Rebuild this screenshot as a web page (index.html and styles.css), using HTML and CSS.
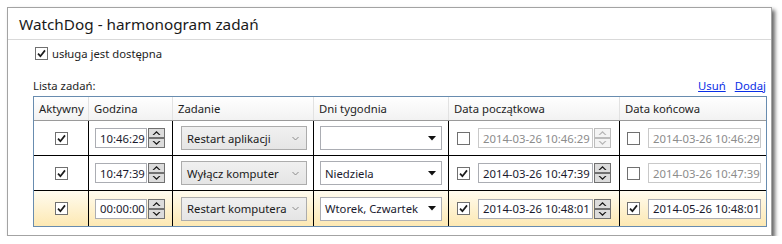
FILE: index.html
```html
<!DOCTYPE html>
<html lang="pl">
<head>
<meta charset="utf-8">
<title>WatchDog - harmonogram zadań</title>
<link rel="stylesheet" href="styles.css">
</head>
<body>
<div class="window">
  <div class="title">WatchDog - harmonogram zadań</div>
  <div class="content">
    <label class="service">
      <svg class="cb" width="13" height="13" viewBox="0 0 13 13"><rect x="0.5" y="0.5" width="12" height="12" fill="#fff" stroke="#707070"/><path d="M3 6.6 L5.4 9.2 L10 3.4" fill="none" stroke="#1c1c1c" stroke-width="1.7"/></svg>
      <span>usługa jest dostępna</span>
    </label>
    <div class="listbar">
      <span>Lista zadań:</span>
      <span class="links"><a href="#">Usuń</a><a href="#">Dodaj</a></span>
    </div>
    <div class="grid">
      <div class="row head">
        <div class="hc">Aktywny</div>
        <div class="hc">Godzina</div>
        <div class="hc">Zadanie</div>
        <div class="hc">Dni tygodnia</div>
        <div class="hc">Data początkowa</div>
        <div class="hc">Data końcowa</div>
      </div>

      <div class="row body">
        <div class="c c1"><svg class="cb" width="13" height="13" viewBox="0 0 13 13"><rect x="0.5" y="0.5" width="12" height="12" fill="#fff" stroke="#707070"/><path d="M3 6.6 L5.4 9.2 L10 3.4" fill="none" stroke="#1c1c1c" stroke-width="1.7"/></svg></div>
        <div class="c c2"><span class="tb time">10:46:29</span><svg class="spin" width="17" height="20" viewBox="0 0 17 20"><rect x="0.5" y="0.5" width="16" height="9" fill="#dcdcdc" stroke="#707070"/><rect x="0.5" y="10.5" width="16" height="9" fill="#dcdcdc" stroke="#707070"/><path d="M4.5 7 L8.5 3 L12.5 7 L11 7 L8.5 4.8 L6 7 Z" fill="#111"/><path d="M4.5 13 L8.5 17 L12.5 13 L11 13 L8.5 15.2 L6 13 Z" fill="#111"/></svg></div>
        <div class="c c3"><span class="combo">Restart aplikacji<svg class="chev" width="7" height="5" viewBox="0 0 7 5"><path d="M0.5 1 L3.5 4 L6.5 1" fill="none" stroke="#8a8a8a" stroke-width="1"/></svg></span></div>
        <div class="c c4"><span class="dd"><span></span><svg class="tri" width="8" height="5" viewBox="0 0 8 5"><path d="M0 0 H8 L4 4.5 Z" fill="#111"/></svg></span></div>
        <div class="c c5"><svg class="cb" width="13" height="13" viewBox="0 0 13 13"><rect x="0.5" y="0.5" width="12" height="12" fill="#fff" stroke="#707070"/></svg><span class="tb date dis">2014-03-26 10:46:29</span><svg class="spin" width="17" height="20" viewBox="0 0 17 20"><rect x="0.5" y="0.5" width="16" height="9" fill="#f4f4f4" stroke="#bcbcbc"/><rect x="0.5" y="10.5" width="16" height="9" fill="#f4f4f4" stroke="#bcbcbc"/><path d="M4.5 7 L8.5 3 L12.5 7 L11 7 L8.5 4.8 L6 7 Z" fill="#b5b5b5"/><path d="M4.5 13 L8.5 17 L12.5 13 L11 13 L8.5 15.2 L6 13 Z" fill="#b5b5b5"/></svg></div>
        <div class="c c6"><svg class="cb" width="13" height="13" viewBox="0 0 13 13"><rect x="0.5" y="0.5" width="12" height="12" fill="#fff" stroke="#707070"/></svg><span class="tb end dis">2014-03-26 10:46:29</span></div>
      </div>

      <div class="row body">
        <div class="c c1"><svg class="cb" width="13" height="13" viewBox="0 0 13 13"><rect x="0.5" y="0.5" width="12" height="12" fill="#fff" stroke="#707070"/><path d="M3 6.6 L5.4 9.2 L10 3.4" fill="none" stroke="#1c1c1c" stroke-width="1.7"/></svg></div>
        <div class="c c2"><span class="tb time">10:47:39</span><svg class="spin" width="17" height="20" viewBox="0 0 17 20"><rect x="0.5" y="0.5" width="16" height="9" fill="#dcdcdc" stroke="#707070"/><rect x="0.5" y="10.5" width="16" height="9" fill="#dcdcdc" stroke="#707070"/><path d="M4.5 7 L8.5 3 L12.5 7 L11 7 L8.5 4.8 L6 7 Z" fill="#111"/><path d="M4.5 13 L8.5 17 L12.5 13 L11 13 L8.5 15.2 L6 13 Z" fill="#111"/></svg></div>
        <div class="c c3"><span class="combo">Wyłącz komputer<svg class="chev" width="7" height="5" viewBox="0 0 7 5"><path d="M0.5 1 L3.5 4 L6.5 1" fill="none" stroke="#8a8a8a" stroke-width="1"/></svg></span></div>
        <div class="c c4"><span class="dd"><span>Niedziela</span><svg class="tri" width="8" height="5" viewBox="0 0 8 5"><path d="M0 0 H8 L4 4.5 Z" fill="#111"/></svg></span></div>
        <div class="c c5"><svg class="cb" width="13" height="13" viewBox="0 0 13 13"><rect x="0.5" y="0.5" width="12" height="12" fill="#fff" stroke="#707070"/><path d="M3 6.6 L5.4 9.2 L10 3.4" fill="none" stroke="#1c1c1c" stroke-width="1.7"/></svg><span class="tb date">2014-03-26 10:47:39</span><svg class="spin" width="17" height="20" viewBox="0 0 17 20"><rect x="0.5" y="0.5" width="16" height="9" fill="#dcdcdc" stroke="#707070"/><rect x="0.5" y="10.5" width="16" height="9" fill="#dcdcdc" stroke="#707070"/><path d="M4.5 7 L8.5 3 L12.5 7 L11 7 L8.5 4.8 L6 7 Z" fill="#111"/><path d="M4.5 13 L8.5 17 L12.5 13 L11 13 L8.5 15.2 L6 13 Z" fill="#111"/></svg></div>
        <div class="c c6"><svg class="cb" width="13" height="13" viewBox="0 0 13 13"><rect x="0.5" y="0.5" width="12" height="12" fill="#fff" stroke="#707070"/></svg><span class="tb end dis">2014-03-26 10:47:39</span></div>
      </div>

      <div class="row body sel">
        <div class="c c1"><svg class="cb" width="13" height="13" viewBox="0 0 13 13"><rect x="0.5" y="0.5" width="12" height="12" fill="#fff" stroke="#707070"/><path d="M3 6.6 L5.4 9.2 L10 3.4" fill="none" stroke="#1c1c1c" stroke-width="1.7"/></svg></div>
        <div class="c c2"><span class="tb time">00:00:00</span><svg class="spin" width="17" height="20" viewBox="0 0 17 20"><rect x="0.5" y="0.5" width="16" height="9" fill="#dcdcdc" stroke="#707070"/><rect x="0.5" y="10.5" width="16" height="9" fill="#dcdcdc" stroke="#707070"/><path d="M4.5 7 L8.5 3 L12.5 7 L11 7 L8.5 4.8 L6 7 Z" fill="#111"/><path d="M4.5 13 L8.5 17 L12.5 13 L11 13 L8.5 15.2 L6 13 Z" fill="#111"/></svg></div>
        <div class="c c3"><span class="combo">Restart komputera<svg class="chev" width="7" height="5" viewBox="0 0 7 5"><path d="M0.5 1 L3.5 4 L6.5 1" fill="none" stroke="#8a8a8a" stroke-width="1"/></svg></span></div>
        <div class="c c4"><span class="dd"><span>Wtorek, Czwartek</span><svg class="tri" width="8" height="5" viewBox="0 0 8 5"><path d="M0 0 H8 L4 4.5 Z" fill="#111"/></svg></span></div>
        <div class="c c5"><svg class="cb" width="13" height="13" viewBox="0 0 13 13"><rect x="0.5" y="0.5" width="12" height="12" fill="#fff" stroke="#707070"/><path d="M3 6.6 L5.4 9.2 L10 3.4" fill="none" stroke="#1c1c1c" stroke-width="1.7"/></svg><span class="tb date">2014-03-26 10:48:01</span><svg class="spin" width="17" height="20" viewBox="0 0 17 20"><rect x="0.5" y="0.5" width="16" height="9" fill="#dcdcdc" stroke="#707070"/><rect x="0.5" y="10.5" width="16" height="9" fill="#dcdcdc" stroke="#707070"/><path d="M4.5 7 L8.5 3 L12.5 7 L11 7 L8.5 4.8 L6 7 Z" fill="#111"/><path d="M4.5 13 L8.5 17 L12.5 13 L11 13 L8.5 15.2 L6 13 Z" fill="#111"/></svg></div>
        <div class="c c6"><svg class="cb" width="13" height="13" viewBox="0 0 13 13"><rect x="0.5" y="0.5" width="12" height="12" fill="#fff" stroke="#707070"/><path d="M3 6.6 L5.4 9.2 L10 3.4" fill="none" stroke="#1c1c1c" stroke-width="1.7"/></svg><span class="tb end">2014-05-26 10:48:01</span></div>
      </div>
    </div>
  </div>
</div>
</body>
</html>
```

FILE: styles.css
```css
* { box-sizing: border-box; }
html, body { margin: 0; padding: 0; background: #fff; }
body {
  padding: 7px 0 0 7px;
  font-family: "Noto Sans", "Open Sans", sans-serif;
  font-size: 11.3px;
  color: #1e1e1e;
}
.window {
  width: 765px;
  height: 229px;
  border: 1px solid #a3a3a3;
  background: #fff;
  box-shadow: 3px 3px 4px rgba(0, 0, 0, 0.6);
}
.title {
  height: 32px;
  line-height: 33px;
  padding-left: 11px;
  font-size: 15.3px;
  color: #1a1a1a;
  border-bottom: 1px solid #d9d9d9;
}
.content {
  padding: 0 4px 0 25px;
}
.service {
  display: flex;
  align-items: center;
  gap: 4px;
  height: 13px;
  margin: 7px 0 0 2px;
}
.cb { display: block; flex: none; }
.listbar {
  display: flex;
  justify-content: space-between;
  align-items: center;
  height: 16px;
  margin-top: 17px;
}
.links { display: flex; gap: 9px; margin-right: 1px; }
.links a { color: #0a2ee6; text-decoration: underline; }
.grid {
  margin-top: 3px;
  width: 734px;
  border: 1px solid #688caf;
}
.row {
  display: grid;
  grid-template-columns: 55px 84px 141px 135px 171px 145px;
}
.head {
  height: 24px;
  background: linear-gradient(#ffffff, #f2f2f2);
  border-bottom: 1px solid #9a9a9a;
}
.hc {
  display: flex;
  align-items: center;
  padding-left: 5px;
  border-right: 1px solid #e2e2e2;
}
.hc:last-child { border-right: none; }
.body {
  height: 35px;
  border-bottom: 1px solid #000;
}
.body:last-child { border-bottom: none; height: 35px; }
.sel { background: linear-gradient(#fffbef, #fde9b3); }
.c {
  display: flex;
  align-items: center;
  border-right: 1px solid #000;
  overflow: hidden;
}
.c:last-child { border-right: none; }
.c1 { justify-content: center; }
.c2 { padding-left: 6px; gap: 1px; }
.c3 { padding-left: 8px; }
.c4 { padding-left: 6px; }
.c5 { padding-left: 8px; }
.c6 { padding-left: 7px; }
.c5 .cb { margin-right: 8px; }
.c6 .cb { margin-right: 8px; }
.tb {
  display: flex;
  align-items: center;
  height: 20px;
  border: 1px solid #abadb3;
  background: #fff;
  color: #1a1a2e;
  padding-left: 4px;
  white-space: nowrap;
  flex: none;
}
.tb.dis { color: #8c8c8c; border-color: #c9c9c9; }
.time { width: 52px; }
.date { width: 115px; margin-right: 1px; }
.end { width: 113px; overflow: hidden; }
.spin { display: block; flex: none; }
.combo {
  display: flex;
  align-items: center;
  justify-content: space-between;
  width: 126px;
  height: 24px;
  padding: 0 7px 0 5px;
  border: 1px solid #acacac;
  background: linear-gradient(#f0f0f0, #e5e5e5);
  color: #1a1a1a;
}
.chev { display: block; }
.dd {
  display: flex;
  align-items: center;
  justify-content: space-between;
  width: 122px;
  height: 24px;
  padding: 0 5px 0 4px;
  border: 1px solid #abadb3;
  background: #fff;
  color: #1a1a2e;
}
.tri { display: block; }
```
